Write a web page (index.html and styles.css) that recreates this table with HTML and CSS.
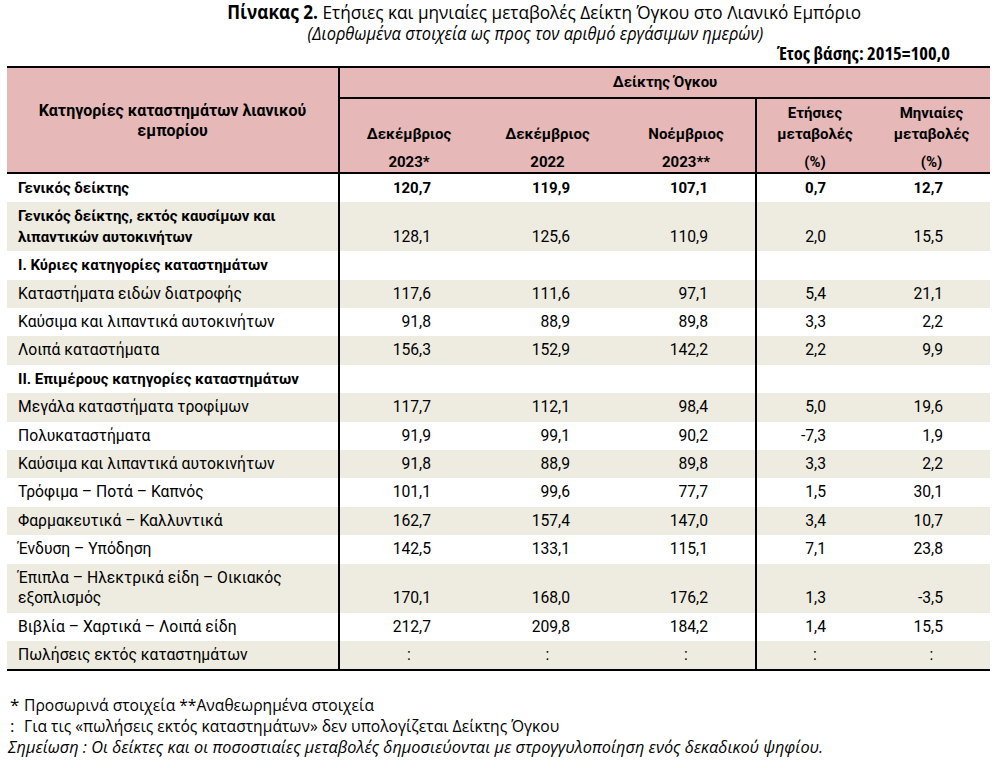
FILE: index.html
```html
<!DOCTYPE html>
<html lang="el">
<head>
<meta charset="utf-8">
<title>Πίνακας 2</title>
<link rel="stylesheet" href="styles.css">
</head>
<body>
<div class="page">
  <header class="caption">
    <div class="title"><span class="narrow"><b>Πίνακας 2.</b> Ετήσιες και μηνιαίες μεταβολές Δείκτη Όγκου στο Λιανικό Εμπόριο</span></div>
    <div class="subtitle"><span class="narrow">(Διορθωμένα στοιχεία ως προς τον αριθμό εργάσιμων ημερών)</span></div>
    <div class="base">Έτος βάσης: 2015=100,0</div>
  </header>

  <table class="data">
    <colgroup>
      <col class="c-label">
      <col class="c-num">
      <col class="c-num">
      <col class="c-num">
      <col class="c-pct">
      <col class="c-pct">
    </colgroup>
    <thead>
      <tr class="h-a">
        <th rowspan="3" class="h-label">Κατηγορίες καταστημάτων λιανικού<br>εμπορίου</th>
        <th colspan="5" class="h-group">Δείκτης Όγκου</th>
      </tr>
      <tr class="h-b">
        <th>Δεκέμβριος</th>
        <th>Δεκέμβριος</th>
        <th>Νοέμβριος</th>
        <th class="sep">Ετήσιες<br>μεταβολές</th>
        <th>Μηνιαίες<br>μεταβολές</th>
      </tr>
      <tr class="h-c">
        <th>2023*</th>
        <th>2022</th>
        <th>2023**</th>
        <th class="sep">(%)</th>
        <th>(%)</th>
      </tr>
    </thead>
    <tbody>
      <tr class="bold"><td>Γενικός δείκτης</td><td>120,7</td><td>119,9</td><td>107,1</td><td class="sep">0,7</td><td>12,7</td></tr>
      <tr class="alt"><td class="b">Γενικός δείκτης, εκτός καυσίμων και<br>λιπαντικών αυτοκινήτων</td><td>128,1</td><td>125,6</td><td>110,9</td><td class="sep">2,0</td><td>15,5</td></tr>
      <tr><td class="b">I. Κύριες κατηγορίες καταστημάτων</td><td></td><td></td><td></td><td class="sep"></td><td></td></tr>
      <tr class="alt"><td>Καταστήματα ειδών διατροφής</td><td>117,6</td><td>111,6</td><td>97,1</td><td class="sep">5,4</td><td>21,1</td></tr>
      <tr><td>Καύσιμα και λιπαντικά αυτοκινήτων</td><td>91,8</td><td>88,9</td><td>89,8</td><td class="sep">3,3</td><td>2,2</td></tr>
      <tr class="alt"><td>Λοιπά καταστήματα</td><td>156,3</td><td>152,9</td><td>142,2</td><td class="sep">2,2</td><td>9,9</td></tr>
      <tr><td class="b">II. Επιμέρους κατηγορίες καταστημάτων</td><td></td><td></td><td></td><td class="sep"></td><td></td></tr>
      <tr class="alt"><td>Μεγάλα καταστήματα τροφίμων</td><td>117,7</td><td>112,1</td><td>98,4</td><td class="sep">5,0</td><td>19,6</td></tr>
      <tr><td>Πολυκαταστήματα</td><td>91,9</td><td>99,1</td><td>90,2</td><td class="sep">-7,3</td><td>1,9</td></tr>
      <tr class="alt"><td>Καύσιμα και λιπαντικά αυτοκινήτων</td><td>91,8</td><td>88,9</td><td>89,8</td><td class="sep">3,3</td><td>2,2</td></tr>
      <tr><td>Τρόφιμα – Ποτά – Καπνός</td><td>101,1</td><td>99,6</td><td>77,7</td><td class="sep">1,5</td><td>30,1</td></tr>
      <tr class="alt"><td>Φαρμακευτικά – Καλλυντικά</td><td>162,7</td><td>157,4</td><td>147,0</td><td class="sep">3,4</td><td>10,7</td></tr>
      <tr><td>Ένδυση – Υπόδηση</td><td>142,5</td><td>133,1</td><td>115,1</td><td class="sep">7,1</td><td>23,8</td></tr>
      <tr class="alt"><td>Έπιπλα – Ηλεκτρικά είδη – Οικιακός<br>εξοπλισμός</td><td>170,1</td><td>168,0</td><td>176,2</td><td class="sep">1,3</td><td>-3,5</td></tr>
      <tr><td>Βιβλία – Χαρτικά – Λοιπά είδη</td><td>212,7</td><td>209,8</td><td>184,2</td><td class="sep">1,4</td><td>15,5</td></tr>
      <tr class="alt na"><td>Πωλήσεις εκτός καταστημάτων</td><td>:</td><td>:</td><td>:</td><td class="sep">:</td><td>:</td></tr>
    </tbody>
  </table>

  <footer class="notes">
    <div class="note"><span class="mark">*</span><span class="narrow">Προσωρινά στοιχεία **Αναθεωρημένα στοιχεία</span></div>
    <div class="note"><span class="mark">:</span><span class="narrow">Για τις «πωλήσεις εκτός καταστημάτων» δεν υπολογίζεται Δείκτης Όγκου</span></div>
    <div class="note italic"><span class="narrow">Σημείωση : Οι δείκτες και οι ποσοστιαίες μεταβολές δημοσιεύονται με στρογγυλοποίηση ενός δεκαδικού ψηφίου.</span></div>
  </footer>
</div>
</body>
</html>
```

FILE: styles.css
```css
html, body {
  margin: 0;
  padding: 0;
  background: #ffffff;
  color: #000000;
}

.page {
  width: 1007px;
  font-family: Roboto, "Liberation Sans", sans-serif;
}

.narrow {
  display: inline-block;
  white-space: nowrap;
}

.caption {
  display: flex;
  flex-direction: column;
  font-family: "Open Sans", "Liberation Sans", sans-serif;
}

.title {
  font-size: 19px;
  line-height: 22px;
  height: 22px;
  padding-top: 1px;
  text-align: center;
  padding-left: 81px;
  white-space: nowrap;
}

.title .narrow {
  transform: scaleX(0.905);
  transform-origin: center;
}

.title b {
  font-weight: 700;
}

.subtitle {
  font-size: 18px;
  line-height: 20px;
  height: 20px;
  font-style: italic;
  text-align: center;
  padding-left: 63px;
  white-space: nowrap;
}

.subtitle .narrow {
  transform: scaleX(0.917);
  transform-origin: center;
}

.base {
  font-size: 18.5px;
  line-height: 20px;
  height: 20px;
  padding-bottom: 1px;
  font-stretch: 75%;
  font-weight: 700;
  text-align: right;
  padding-right: 57px;
  white-space: nowrap;
}

.data {
  margin-top: 2px;
  margin-left: 7px;
  width: 983px;
  table-layout: fixed;
  border-collapse: collapse;
  font-size: 15.7px;
  line-height: 20.4px;
}

.c-label { width: 332px; }
.c-num { width: 139px; }
.c-pct { width: 117px; }

.data thead {
  background: #e6b8b7;
  border-top: 2px solid #000;
  border-bottom: 2px solid #000;
}

.data th {
  font-weight: 700;
  font-size: 15px;
  text-align: center;
  padding: 0 4px;
}

.data th.h-label {
  font-size: 16px;
  vertical-align: middle;
  border-right: 2px solid #000;
  padding-top: 2px;
}

.h-a th.h-group {
  height: 29px;
  vertical-align: middle;
  border-bottom: 2px solid #000;
}

.h-b th {
  height: 45px;
  vertical-align: bottom;
  padding-bottom: 0;
}

.h-c th {
  height: 28px;
  vertical-align: bottom;
  padding-bottom: 0;
}

.data th.sep,
.data td.sep {
  border-left: 2px solid #000;
}

.data td {
  padding: 4px 47px 4px 4px;
  text-align: right;
  vertical-align: bottom;
  white-space: nowrap;
}

.data td:first-child {
  text-align: left;
  padding: 4px 4px 4px 11px;
  border-right: 2px solid #000;
}

.data tbody tr.alt {
  background: #eeece1;
}

.data tbody {
  border-bottom: 2px solid #000;
}

.data tr.bold td,
.data td.b {
  font-weight: 700;
  font-size: 15px;
}

.data tr.na td:not(:first-child) {
  text-align: center;
  padding-right: 4px;
}

.notes {
  padding-top: 23px;
  display: flex;
  flex-direction: column;
  font-family: "Open Sans", "Liberation Sans", sans-serif;
  font-size: 17px;
  line-height: 21px;
}

.note {
  display: flex;
  padding-left: 8px;
  height: 21px;
  white-space: nowrap;
}

.note .narrow {
  transform: scaleX(0.92);
  transform-origin: left center;
}

.mark {
  width: 14px;
  padding-left: 2px;
  flex: none;
}

.note.italic {
  font-style: italic;
}

.note.italic .narrow {
  transform: scaleX(0.96);
}
```
